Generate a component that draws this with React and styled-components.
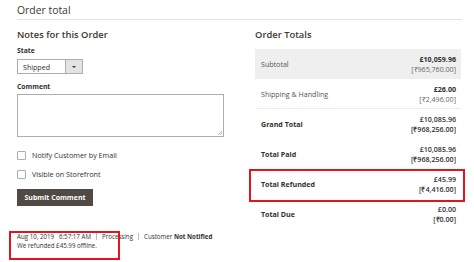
import React from "react";
import styled, { createGlobalStyle } from "styled-components";

const Global = createGlobalStyle`
  html, body { margin: 0; padding: 0; background: #fff; }
  body { font-family: "Open Sans", "Liberation Sans", sans-serif; color: #303030; }
  * { box-sizing: border-box; }
`;

const Page = styled.div`
  width: 474px;
  height: 262px;
  padding: 0 12px 0 17px;
  overflow: hidden;
`;

const SectionTitle = styled.div`
  font-size: 10.4px;
  line-height: 14px;
  color: #41362f;
  padding: 3px 0 2px;
  border-bottom: 1px solid #e3e3e3;
`;

const Columns = styled.div`
  display: grid;
  grid-template-columns: 207px 206px;
  column-gap: 31px;
  padding-top: 9px;
`;

const Column = styled.div`
  display: flex;
  flex-direction: column;
`;

const Heading = styled.div`
  font-size: 9.4px;
  font-weight: 600;
  line-height: 12px;
  color: #41362f;
`;

const FieldLabel = styled.div`
  font-size: 6.8px;
  font-weight: 700;
  line-height: 9px;
  color: #303030;
  margin-top: ${(p) => p.$mt}px;
`;

const Select = styled.div`
  margin-top: 4px;
  width: 66px;
  height: 15px;
  border: 1px solid #adadad;
  display: flex;
  align-items: stretch;
  font-size: 7.1px;
  color: #303030;
`;

const SelectValue = styled.div`
  flex: 1;
  display: flex;
  align-items: center;
  padding-left: 5px;
`;

const SelectArrow = styled.div`
  width: 17px;
  background: #e3e3e3;
  border-left: 1px solid #adadad;
  display: flex;
  align-items: center;
  justify-content: center;
  &::after {
    content: "";
    border-left: 2px solid transparent;
    border-right: 2px solid transparent;
    border-top: 2.5px solid #41362f;
  }
`;

const TextArea = styled.div`
  margin-top: 3px;
  width: 207px;
  height: 43px;
  border: 1px solid #adadad;
  position: relative;
  &::after {
    content: "";
    position: absolute;
    right: 1px;
    bottom: 1px;
    width: 4px;
    height: 4px;
    background: linear-gradient(135deg, transparent 45%, #b5b5b5 45%, #b5b5b5 55%, transparent 55%, transparent 70%, #b5b5b5 70%, #b5b5b5 80%, transparent 80%);
  }
`;

const CheckRow = styled.div`
  display: flex;
  align-items: center;
  gap: 6px;
  margin-top: ${(p) => p.$mt}px;
  font-size: 7.2px;
  line-height: 9px;
  color: #303030;
`;

const Box = styled.span`
  width: 9px;
  height: 9px;
  border: 1px solid #adadad;
  border-radius: 1px;
  background: #fff;
  flex: none;
`;

const Button = styled.div`
  margin-top: 10px;
  width: 76px;
  height: 17px;
  background: #514943;
  color: #fff;
  font-size: 7px;
  font-weight: 700;
  display: flex;
  align-items: center;
  justify-content: center;
`;

const History = styled.div`
  margin-top: 26px;
  font-size: 6.2px;
  line-height: 9px;
  color: #303030;
  position: relative;
  &::before {
    content: "";
    position: absolute;
    left: -8px;
    top: -1px;
    width: 107px;
    height: 25px;
    border: 2px solid #e3141d;
  }
`;

const Sep = styled.span`
  display: inline-block;
  width: 1px;
  height: 7px;
  background: #bdbdbd;
  margin: 0 5px;
  vertical-align: -1px;
`;

const Table = styled.div`
  margin-top: 8px;
  display: flex;
  flex-direction: column;
`;

const Row = styled.div`
  height: 30px;
  display: flex;
  align-items: center;
  justify-content: space-between;
  padding: 0 5px 0 6px;
  background: ${(p) => (p.$shaded ? "#efefef" : "transparent")};
  border-bottom: ${(p) => (p.$line ? "1px solid #ececec" : "none")};
  position: relative;
  ${(p) =>
    p.$marked &&
    `&::after {
      content: "";
      position: absolute;
      left: -6px;
      right: -4px;
      top: 0;
      bottom: -3px;
      border: 2px solid #e3141d;
    }`}
`;

const RowLabel = styled.div`
  font-size: 7.1px;
  font-weight: ${(p) => (p.$strong ? 700 : 400)};
  color: ${(p) => (p.$strong ? "#303030" : "#555")};
`;

const Amount = styled.div`
  text-align: right;
  font-size: 7.1px;
  line-height: 10px;
`;

const Main = styled.div`
  font-weight: ${(p) => (p.$strong ? 600 : 700)};
  color: #303030;
`;

const Base = styled.div`
  font-weight: ${(p) => (p.$strong ? 600 : 400)};
  color: ${(p) => (p.$strong ? "#303030" : "#666")};
`;

const rows = [
  { label: "Subtotal", main: "£10,059.96", base: "[₹965,760.00]", shaded: true },
  { label: "Shipping & Handling", main: "£26.00", base: "[₹2,496.00]", line: true },
  { label: "Grand Total", main: "£10,085.96", base: "[₹968,256.00]", strong: true },
  { label: "Total Paid", main: "£10,085.96", base: "[₹968,256.00]", strong: true },
  { label: "Total Refunded", main: "£45.99", base: "[₹4,416.00]", strong: true, marked: true },
  { label: "Total Due", main: "£0.00", base: "[₹0.00]", strong: true },
];

export default function App() {
  return (
    <Page>
      <Global />
      <SectionTitle>Order total</SectionTitle>
      <Columns>
        <Column>
          <Heading>Notes for this Order</Heading>
          <FieldLabel $mt={5}>State</FieldLabel>
          <Select>
            <SelectValue>Shipped</SelectValue>
            <SelectArrow />
          </Select>
          <FieldLabel $mt={8}>Comment</FieldLabel>
          <TextArea />
          <CheckRow $mt={14}>
            <Box />
            Notify Customer by Email
          </CheckRow>
          <CheckRow $mt={10}>
            <Box />
            Visible on Storefront
          </CheckRow>
          <Button>Submit Comment</Button>
          <History>
            <div>
              Aug 10, 2019&nbsp;&nbsp;&nbsp;6:57:17 AM
              <Sep />
              Processing
              <Sep />
              Customer <b>Not Notified</b>
            </div>
            <div>We refunded £45.99 offline.</div>
          </History>
        </Column>
        <Column>
          <Heading>Order Totals</Heading>
          <Table>
            {rows.map((r) => (
              <Row key={r.label} $shaded={r.shaded} $line={r.line} $marked={r.marked}>
                <RowLabel $strong={r.strong}>{r.label}</RowLabel>
                <Amount>
                  <Main $strong={r.strong}>{r.main}</Main>
                  <Base $strong={r.strong}>{r.base}</Base>
                </Amount>
              </Row>
            ))}
          </Table>
        </Column>
      </Columns>
    </Page>
  );
}
